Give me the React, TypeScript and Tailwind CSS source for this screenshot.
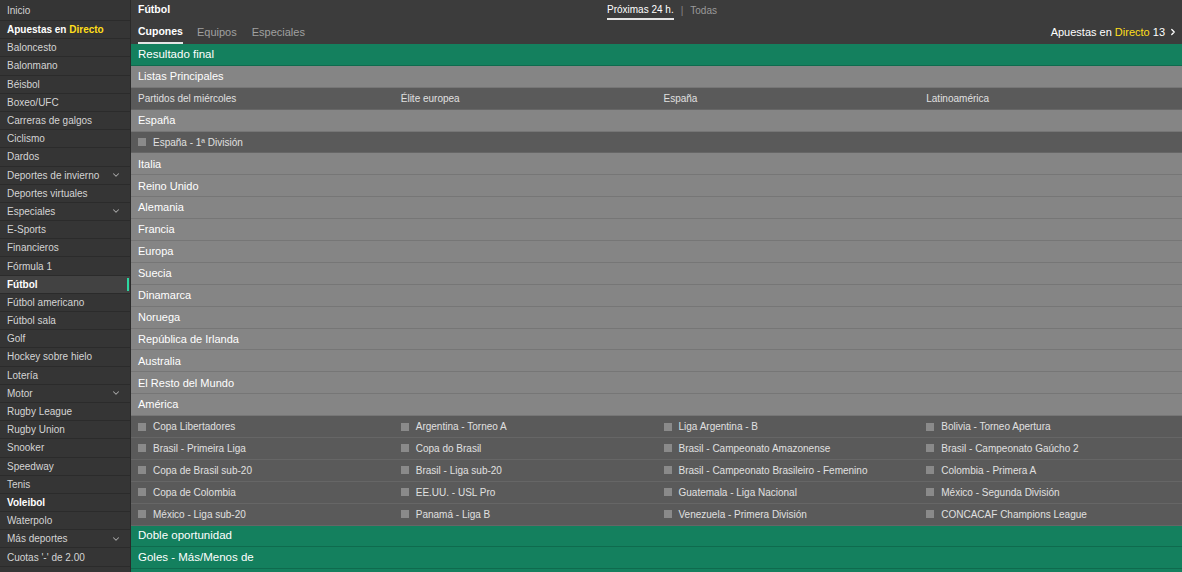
import { ChevronDown, ChevronRight } from 'lucide-react';

const FONT = { fontFamily: 'Tahoma, "Liberation Sans", Arial, sans-serif' };

type SideItem = { label: string; bold?: boolean; chevron?: boolean; active?: boolean };

const SIDEBAR: SideItem[] = [
  { label: 'Baloncesto' },
  { label: 'Balonmano' },
  { label: 'Béisbol' },
  { label: 'Boxeo/UFC' },
  { label: 'Carreras de galgos' },
  { label: 'Ciclismo' },
  { label: 'Dardos' },
  { label: 'Deportes de invierno', chevron: true },
  { label: 'Deportes virtuales' },
  { label: 'Especiales', chevron: true },
  { label: 'E-Sports' },
  { label: 'Financieros' },
  { label: 'Fórmula 1' },
  { label: 'Fútbol', bold: true, active: true },
  { label: 'Fútbol americano' },
  { label: 'Fútbol sala' },
  { label: 'Golf' },
  { label: 'Hockey sobre hielo' },
  { label: 'Lotería' },
  { label: 'Motor', chevron: true },
  { label: 'Rugby League' },
  { label: 'Rugby Union' },
  { label: 'Snooker' },
  { label: 'Speedway' },
  { label: 'Tenis' },
  { label: 'Voleibol', bold: true },
  { label: 'Waterpolo' },
  { label: 'Más deportes', chevron: true },
  { label: "Cuotas '-' de 2.00" },
];

const COUNTRIES = [
  'Italia',
  'Reino Unido',
  'Alemania',
  'Francia',
  'Europa',
  'Suecia',
  'Dinamarca',
  'Noruega',
  'República de Irlanda',
  'Australia',
  'El Resto del Mundo',
];

const AMERICA = [
  ['Copa Libertadores', 'Argentina - Torneo A', 'Liga Argentina - B', 'Bolivia - Torneo Apertura'],
  ['Brasil - Primeira Liga', 'Copa do Brasil', 'Brasil - Campeonato Amazonense', 'Brasil - Campeonato Gaúcho 2'],
  ['Copa de Brasil sub-20', 'Brasil - Liga sub-20', 'Brasil - Campeonato Brasileiro - Femenino', 'Colombia - Primera A'],
  ['Copa de Colombia', 'EE.UU. - USL Pro', 'Guatemala - Liga Nacional', 'México - Segunda División'],
  ['México - Liga sub-20', 'Panamá - Liga B', 'Venezuela - Primera División', 'CONCACAF Champions League'],
];

function Check() {
  return <span className="w-[8px] h-[8px] bg-[#8a8a8a] shrink-0 mr-[7px]" />;
}

function GreenRow({ label }: { label: string }) {
  return (
    <div className="h-[21.9px] flex items-center px-[7px] bg-[#14805e] border-b border-[#0f6b4e] text-[11.5px] text-white">
      {label}
    </div>
  );
}

function LightRow({ label }: { label: string }) {
  return (
    <div className="h-[21.9px] flex items-center px-[7px] bg-[#858585] border-b border-[#767676] text-[11px] text-white">
      {label}
    </div>
  );
}

export default function App() {
  return (
    <div className="w-[1182px] h-[572px] flex overflow-hidden bg-[#595959]" style={FONT}>
      {/* Sidebar */}
      <div className="w-[131px] shrink-0 bg-[#353535] border-r border-[#2a2a2a] text-[10px] text-[#d4d4d4]">
        <div className="h-[21px] flex items-center px-[7px] pt-[1px] border-b border-[#2b2b2b]">Inicio</div>
        <div className="h-[18.2px] flex items-center px-[7px] border-b border-[#2b2b2b] font-bold text-white whitespace-nowrap">
          <span>
            Apuestas en <span className="text-[#ffdf1b]">Directo</span>
          </span>
        </div>
        {SIDEBAR.map(item => (
          <div
            key={item.label}
            className={`h-[18.2px] flex items-center px-[7px] border-b border-[#2b2b2b] relative ${
              item.bold ? 'font-bold text-white' : ''
            } ${item.active ? 'bg-[#424242]' : ''}`}
          >
            <span className="flex-1 whitespace-nowrap">{item.label}</span>
            {item.chevron && <ChevronDown className="w-[10px] h-[10px] text-[#aaa] mr-[2px]" strokeWidth={2.5} />}
            {item.active && <span className="absolute right-[1px] top-[2px] bottom-[2px] w-[2px] bg-[#2dd6a0]" />}
          </div>
        ))}
      </div>

      {/* Main */}
      <div className="flex-1 flex flex-col">
        <div className="h-[20px] flex items-center px-[7px] bg-[#3c3c3c] relative text-[10.5px]">
          <span className="font-bold text-white">Fútbol</span>
          <div className="absolute left-[476px] top-0 h-[20px] flex items-center text-[10px]">
            <span className="text-white border-b-2 border-[#e5e5e5] h-[20px] flex items-center pt-[1px]">Próximas 24 h.</span>
            <span className="text-[#888] mx-[7px]">|</span>
            <span className="text-[#9a9a9a]">Todas</span>
          </div>
        </div>
        <div className="h-[24px] flex items-center px-[7px] bg-[#3c3c3c] text-[11px]">
          <span className="font-bold text-[10.5px] text-white h-full flex items-center border-b-2 border-[#e5e5e5] pt-[2px]">Cupones</span>
          <span className="text-[#a0a0a0] ml-[14px]">Equipos</span>
          <span className="text-[#a0a0a0] ml-[15px]">Especiales</span>
          <span className="flex-1" />
          <span className="text-white">
            Apuestas en <span className="text-[#ffdf1b]">Directo</span> 13
          </span>
          <ChevronRight className="w-[10px] h-[10px] text-white ml-[3px] -mr-[3px]" strokeWidth={3} />
        </div>

        <GreenRow label="Resultado final" />
        <LightRow label="Listas Principales" />
        <div className="h-[21.9px] grid grid-cols-4 items-center bg-[#5a5a5a] border-b border-[#666] text-[10px] text-[#e0e0e0]">
          {['Partidos del miércoles', 'Élite europea', 'España', 'Latinoamérica'].map(t => (
            <span key={t} className="px-[7px]">{t}</span>
          ))}
        </div>
        <LightRow label="España" />
        <div className="h-[21.9px] flex items-center px-[7px] bg-[#5a5a5a] border-b border-[#666] text-[10px] text-[#e0e0e0]">
          <Check />
          España - 1ª División
        </div>
        {COUNTRIES.map(c => (
          <LightRow key={c} label={c} />
        ))}
        <LightRow label="América" />
        {AMERICA.map((row, i) => (
          <div key={i} className="h-[21.9px] grid grid-cols-4 items-center bg-[#5a5a5a] border-b border-[#666] text-[10px] text-[#e0e0e0]">
            {row.map(t => (
              <span key={t} className="px-[7px] flex items-center whitespace-nowrap">
                <Check />
                {t}
              </span>
            ))}
          </div>
        ))}
        <GreenRow label="Doble oportunidad" />
        <GreenRow label="Goles - Más/Menos de" />
        <div className="flex-1 bg-[#14805e]" />
      </div>
    </div>
  );
}
